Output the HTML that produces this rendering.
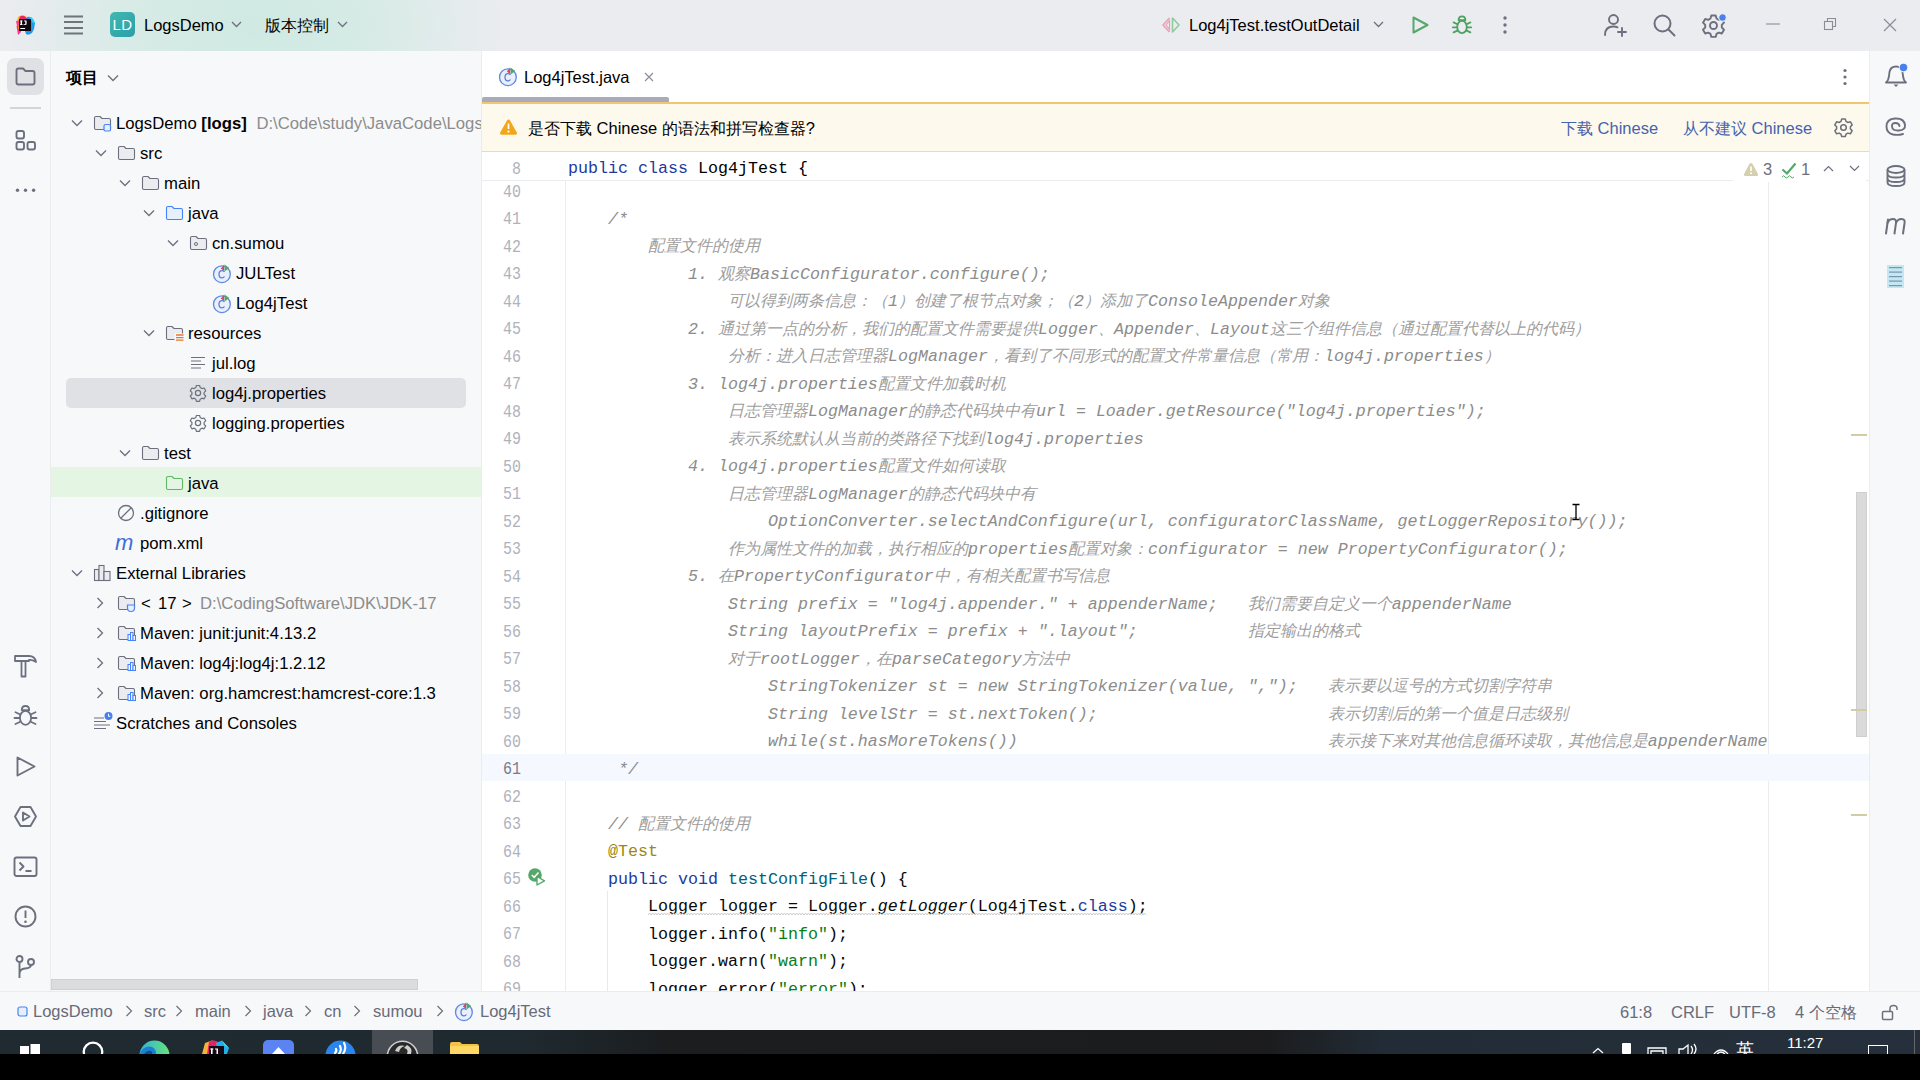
<!DOCTYPE html><html><head><meta charset="utf-8"><style>*{box-sizing:border-box;margin:0;padding:0}
html,body{width:1920px;height:1080px;overflow:hidden;background:#000;font-family:"Liberation Sans",sans-serif;color:#000}
.a{position:absolute}
.k{font-size:16px}
#title{left:0;top:0;width:1920px;height:51px;background:#EBECF0}
#grad{left:0;top:0;width:700px;height:51px;background:radial-gradient(ellipse 255px 170px at 255px 25px, rgba(200,233,222,0.8) 0%, rgba(202,234,224,0.62) 45%, rgba(235,236,240,0) 100%)}
#lstripe{left:0;top:51px;width:51px;height:940px;background:#F7F8FA;border-right:1px solid #EBECF0}
#proj{left:51px;top:51px;width:431px;height:940px;background:#F7F8FA;border-right:1px solid #EBECF0;overflow:hidden}
#editor{left:482px;top:51px;width:1387px;height:940px;background:#fff;overflow:hidden}
#rstripe{left:1869px;top:51px;width:51px;height:940px;background:#F7F8FA;border-left:1px solid #EBECF0}
#status{left:0;top:991px;width:1920px;height:39px;background:#F7F8FA;border-top:1px solid #EBECF0}
#taskbar{left:0;top:1030px;width:1920px;height:24px;background:linear-gradient(90deg,#1F2B31 0%,#1F2A30 27%,#1B1D1F 35%,#1C1C1E 66%,#222C36 72%,#25303C 100%)}
.ui{font-size:16.5px;white-space:pre;line-height:20px}
.tr{position:absolute;font-size:16.7px;white-space:pre;line-height:30px;height:30px}
.gray{color:#8C8C8C}
svg{position:absolute;overflow:visible}
.ln{position:absolute;left:0;height:27.5px;width:1387px;line-height:27.5px;font-family:"Liberation Mono",monospace;font-size:16.67px;white-space:pre}
.ln.cur{background:#F5F8FE}
.ln .num{position:absolute;left:0;top:2.5px;width:39px;text-align:right;color:#AFB2BC;font-size:17.6px;transform:scaleX(0.85);transform-origin:39px 0}
.ln.cur .num{color:#767A8A}
.ln .tx{position:absolute;left:86px;top:2px;color:#080808}
.c{color:#8C8C8C;font-style:italic}
.kw{color:#1E3A9E}
.fn{color:#00627A}
.st{font-style:italic}
.s{color:#067D17}
.an{color:#9E880D}
.c .k{color:#9D9D9D}
</style></head><body><div id="title" class="a"></div>
<div id="grad" class="a"></div>
<!-- title bar content -->
<svg style="left:15px;top:14px" width="21" height="22" viewBox="0 0 21 22">
  <path d="M3 3 Q6 0.5 9 1.5 L12 3 L6 8 L2 7 Z" fill="#FFB000" opacity="0.9"/>
  <path d="M5 2.5 Q8 1 10.5 3 L13 5 L8 13 L2 11 L4 6Z" fill="#E8246B"/>
  <path d="M1 7 L5 6.5 L6 14 L2 12Z" fill="#FF3C8A"/>
  <path d="M1.5 12 L5 11 L6 18 L3 21 Z" fill="#FF318C"/>
  <path d="M3 12 L6 10 L6 16 L3 15 Z" fill="#FC801D"/>
  <path d="M12 3 Q16 2 18 5 L20 9 L19 15 L17 19 Q13 22 11 20 L9 14 Z" fill="#1A9CF2"/>
  <path d="M14 3 Q17 3 18.5 6 L20 9 L18 9 Z" fill="#2FD3F0"/>
  <rect x="4" y="5" width="12" height="12" fill="#120811"/>
  <g fill="#fff"><rect x="5.6" y="6.6" width="1.4" height="4.4"/><rect x="5" y="6.6" width="2.6" height="0.8"/><rect x="5" y="10.2" width="2.6" height="0.8"/><path d="M9.2 6.6H11.6V10Q11.6 11.1 10.3 11.1H8.6V10.2H10.1Q10.3 10.2 10.3 9.9V7.4H9.2Z"/></g>
  <rect x="5.3" y="14" width="4.8" height="1" fill="#fff"/>
</svg>
<svg style="left:64px;top:15px" width="20" height="20" viewBox="0 0 20 20"><path d="M0 1.5H19M0 7.1H19M0 12.9H19M0 18.4H19" stroke="#6F737A" stroke-width="2"/></svg>
<div class="a" style="left:110px;top:12px;width:25px;height:25px;border-radius:5px;background:linear-gradient(135deg,#42B8B3,#2A9FA8);color:#fff;font-size:15px;line-height:25px;text-align:center;letter-spacing:0.3px">LD</div>
<div class="a ui" style="left:144px;top:15px;color:#000">LogsDemo</div>
<svg style="left:231px;top:21px" width="11" height="7" viewBox="0 0 11 7"><path d="M1 1L5.5 5.5L10 1" stroke="#6C707E" stroke-width="1.3" fill="none"/></svg>
<div class="a ui" style="left:265px;top:15px;color:#000"><span class="k">版本控制</span></div>
<svg style="left:337px;top:21px" width="11" height="7" viewBox="0 0 11 7"><path d="M1 1L5.5 5.5L10 1" stroke="#6C707E" stroke-width="1.3" fill="none"/></svg>

<svg style="left:1161px;top:16px" width="20" height="18" viewBox="0 0 20 18">
  <path d="M8.5 2 L2 9 L8.5 16" stroke="#E8A0B4" stroke-width="1.6" fill="none" stroke-linejoin="round"/>
  <path d="M8.5 4.5 L5 9 L8.5 13.5 Z" fill="none" stroke="#E8A0B4" stroke-width="1.2"/>
  <path d="M11.5 2 L18 9 L11.5 16 Z" fill="none" stroke="#8FCB9C" stroke-width="1.6" stroke-linejoin="round"/>
</svg>
<div class="a ui" style="left:1189px;top:15px;color:#000">Log4jTest.testOutDetail</div>
<svg style="left:1373px;top:21px" width="11" height="7" viewBox="0 0 11 7"><path d="M1 1L5.5 5.5L10 1" stroke="#6C707E" stroke-width="1.3" fill="none"/></svg>
<svg style="left:1410px;top:15px" width="20" height="20" viewBox="0 0 20 20"><path d="M3.5 2.5 L17.5 10 L3.5 17.5 Z" fill="none" stroke="#55A76A" stroke-width="2" stroke-linejoin="round"/></svg>
<svg style="left:1451px;top:14px" width="22" height="22" viewBox="0 0 22 22">
  <g stroke="#4FA161" stroke-width="1.8" fill="none" stroke-linecap="round" stroke-linejoin="round">
   <path d="M7.6 6.2 Q7.6 2.4 11 2.4 Q14.4 2.4 14.4 6.2 Z"/>
   <ellipse cx="11" cy="13" rx="4.8" ry="6.2"/>
   <path d="M1.8 13.3H6.2M15.8 13.3H20.2M2.6 8.4L6.4 10.2M19.4 8.4L15.6 10.2M2.6 18.4L6.4 16.6M19.4 18.4L15.6 16.6"/>
  </g>
</svg>
<svg style="left:1502px;top:15px" width="6" height="20" viewBox="0 0 6 20"><circle cx="3" cy="3" r="1.7" fill="#6C707E"/><circle cx="3" cy="10" r="1.7" fill="#6C707E"/><circle cx="3" cy="17" r="1.7" fill="#6C707E"/></svg>
<svg style="left:1603px;top:13px" width="25" height="25" viewBox="0 0 25 25">
 <g stroke="#6C707E" stroke-width="1.9" fill="none" stroke-linecap="round">
  <circle cx="10.5" cy="6.5" r="4.5"/>
  <path d="M2 22 Q2 13.5 10.5 13.5 Q13 13.5 14.5 14.3"/>
  <path d="M19 15V23M15 19H23"/>
 </g>
</svg>
<svg style="left:1652px;top:13px" width="25" height="25" viewBox="0 0 25 25"><g stroke="#6C707E" stroke-width="2" fill="none" stroke-linecap="round"><circle cx="10.5" cy="10.5" r="8"/><path d="M16.5 16.5L22.5 22.5"/></g></svg>
<svg style="left:1701px;top:13px" width="25" height="25" viewBox="0 0 25 25">
 <g stroke="#6C707E" stroke-width="1.9" fill="none" stroke-linejoin="round">
  <path d="M10.3 2.5h4.4l.8 3 2.3 1.3 3-.9 2.2 3.8-2.2 2.2v2.6l2.2 2.2-2.2 3.8-3-.9-2.3 1.3-.8 3h-4.4l-.8-3-2.3-1.3-3 .9-2.2-3.8 2.2-2.2v-2.6l-2.2-2.2 2.2-3.8 3 .9 2.3-1.3z"/>
  <circle cx="12.5" cy="12.5" r="3.5"/>
 </g>
 <circle cx="21.5" cy="4.5" r="3.8" fill="#4A80EE" stroke="#EBECF0" stroke-width="1.2"/>
</svg>
<svg style="left:1766px;top:23px" width="14" height="2" viewBox="0 0 14 2"><path d="M0 1H14" stroke="#8A8D99" stroke-width="1.1"/></svg>
<svg style="left:1823px;top:17px" width="14" height="14" viewBox="0 0 14 14"><g stroke="#8A8D99" stroke-width="1.1" fill="none"><rect x="1.5" y="4.5" width="8" height="8"/><path d="M4.5 4.5V1.5H12.5V9.5H9.5"/></g></svg>
<svg style="left:1883px;top:18px" width="14" height="14" viewBox="0 0 14 14"><path d="M1 1L13 13M13 1L1 13" stroke="#8A8D99" stroke-width="1.2"/></svg>

<div id="lstripe" class="a"></div>
<div class="a" style="left:7px;top:58px;width:37px;height:37px;border-radius:8px;background:#DFE1E5"></div>
<svg style="left:14px;top:66px" width="23" height="21" viewBox="0 0 23 21"><path d="M2.5 4.5 Q2.5 2.5 4.5 2.5 H9 L11.5 5 H18.5 Q20.5 5 20.5 7 V16.5 Q20.5 18.5 18.5 18.5 H4.5 Q2.5 18.5 2.5 16.5 Z" fill="none" stroke="#6C707E" stroke-width="1.9" stroke-linejoin="round"/></svg>
<div class="a" style="left:10px;top:107px;width:31px;height:2px;background:#D3D5DB"></div>
<svg style="left:14px;top:129px" width="24" height="24" viewBox="0 0 24 24"><g fill="none" stroke="#6C707E" stroke-width="1.9"><rect x="2.5" y="2" width="7.5" height="7.5" rx="2"/><rect x="2.5" y="13" width="7.5" height="7.5" rx="2"/><rect x="13.5" y="13" width="7.5" height="7.5" rx="2"/></g></svg>
<svg style="left:14px;top:186px" width="24" height="8" viewBox="0 0 24 8"><g fill="#6C707E"><circle cx="3.5" cy="4.3" r="1.7"/><circle cx="11.5" cy="4.3" r="1.7"/><circle cx="19.6" cy="4.3" r="1.7"/></g></svg>

<svg style="left:13px;top:653px" width="25" height="25" viewBox="0 0 25 25"><g fill="none" stroke="#6C707E" stroke-width="1.8" stroke-linejoin="round"><path d="M2 3 H16 Q22 3 23 9 Q19 6.5 16 7 V8 H2 Z"/><path d="M8.5 8 V23.5 H12.5 V8"/></g></svg>
<svg style="left:13px;top:703px" width="25" height="25" viewBox="0 0 25 25"><g stroke="#6C707E" stroke-width="1.8" fill="none" stroke-linecap="round" stroke-linejoin="round"><path d="M8.8 7.2 Q8.8 3 12.5 3 Q16.2 3 16.2 7.2 Z"/><ellipse cx="12.5" cy="14.8" rx="5.6" ry="7"/><path d="M1.5 15H6.5M18.5 15H23.5M2.5 9.3L6.8 11.3M22.5 9.3L18.2 11.3M2.5 21L6.8 19M22.5 21L18.2 19"/></g></svg>
<svg style="left:13px;top:754px" width="25" height="25" viewBox="0 0 25 25"><path d="M4.5 3.5 L21.5 12.5 L4.5 21.5 Z" fill="none" stroke="#6C707E" stroke-width="1.9" stroke-linejoin="round"/></svg>
<svg style="left:13px;top:804px" width="25" height="25" viewBox="0 0 25 25"><g fill="none" stroke="#6C707E" stroke-width="1.9" stroke-linejoin="round"><path d="M7.5 3 H17.5 L23 12.5 L17.5 22 H7.5 L2 12.5 Z"/><path d="M10 8.5 L16.5 12.5 L10 16.5 Z"/></g></svg>
<svg style="left:13px;top:854px" width="25" height="25" viewBox="0 0 25 25"><g fill="none" stroke="#6C707E" stroke-width="1.9" stroke-linejoin="round"><rect x="1.5" y="3.5" width="22" height="18.5" rx="2"/><path d="M6.5 8.5L10.5 12.5L6.5 16.5M12.5 17H18.5"/></g></svg>
<svg style="left:13px;top:904px" width="25" height="25" viewBox="0 0 25 25"><g fill="none" stroke="#6C707E" stroke-width="1.9"><circle cx="12.5" cy="12.5" r="10"/><path d="M12.5 6.5V14"/></g><circle cx="12.5" cy="17.8" r="1.3" fill="#6C707E"/></svg>
<svg style="left:13px;top:954px" width="25" height="25" viewBox="0 0 25 25"><g fill="none" stroke="#6C707E" stroke-width="1.9"><circle cx="6.5" cy="5" r="3"/><circle cx="18" cy="8" r="3"/><path d="M6.5 8V24M6.5 20Q6.5 15 12 14.5Q18 14 18 11"/></g></svg>

<div id="proj" class="a">
<div class="a ui" style="left:15px;top:16px;font-weight:bold"><span class="k">项目</span></div>
<svg style="left:56px;top:23px" width="12" height="8" viewBox="0 0 12 8"><path d="M1 1.5L6 6.5L11 1.5" stroke="#6C707E" stroke-width="1.3" fill="none"/></svg>
<div class="a" style="left:15px;top:327px;width:400px;height:30px;border-radius:5px;background:#DFE1E5"></div>
<div class="a" style="left:0;top:416px;width:430px;height:30px;background:#E4F5E4"></div>
<svg style="left:20px;top:68px" width="12" height="8" viewBox="0 0 12 8"><path d="M1 1.5L6 6.5L11 1.5" stroke="#6C707E" stroke-width="1.3" fill="none"/></svg>
<svg style="left:42px;top:64px" width="19" height="16" viewBox="0 0 19 16"><path d="M1.5 3 Q1.5 1.5 3 1.5 H7 L9 3.5 H16 Q17.5 3.5 17.5 5 V13 Q17.5 14.5 16 14.5 H3 Q1.5 14.5 1.5 13 Z" fill="#EBECF0" stroke="#6C707E" stroke-width="1.1" stroke-linejoin="round"/><rect x="11" y="9.5" width="6.5" height="6.5" rx="1.5" fill="#E7EFFD" stroke="#4682FA" stroke-width="1.2"/></svg>
<div class="tr" style="left:65px;top:58px">LogsDemo <b>[logs]</b><span class="gray" style="margin-left:5px"> D:\Code\study\JavaCode\LogsDemo</span></div>
<svg style="left:44px;top:98px" width="12" height="8" viewBox="0 0 12 8"><path d="M1 1.5L6 6.5L11 1.5" stroke="#6C707E" stroke-width="1.3" fill="none"/></svg>
<svg style="left:66px;top:94px" width="19" height="16" viewBox="0 0 19 16"><path d="M1.5 3 Q1.5 1.5 3 1.5 H7 L9 3.5 H16 Q17.5 3.5 17.5 5 V13 Q17.5 14.5 16 14.5 H3 Q1.5 14.5 1.5 13 Z" fill="#EBECF0" stroke="#6C707E" stroke-width="1.1" stroke-linejoin="round"/></svg>
<div class="tr" style="left:89px;top:88px">src</div>
<svg style="left:68px;top:128px" width="12" height="8" viewBox="0 0 12 8"><path d="M1 1.5L6 6.5L11 1.5" stroke="#6C707E" stroke-width="1.3" fill="none"/></svg>
<svg style="left:90px;top:124px" width="19" height="16" viewBox="0 0 19 16"><path d="M1.5 3 Q1.5 1.5 3 1.5 H7 L9 3.5 H16 Q17.5 3.5 17.5 5 V13 Q17.5 14.5 16 14.5 H3 Q1.5 14.5 1.5 13 Z" fill="#EBECF0" stroke="#6C707E" stroke-width="1.1" stroke-linejoin="round"/></svg>
<div class="tr" style="left:113px;top:118px">main</div>
<svg style="left:92px;top:158px" width="12" height="8" viewBox="0 0 12 8"><path d="M1 1.5L6 6.5L11 1.5" stroke="#6C707E" stroke-width="1.3" fill="none"/></svg>
<svg style="left:114px;top:154px" width="19" height="16" viewBox="0 0 19 16"><path d="M1.5 3 Q1.5 1.5 3 1.5 H7 L9 3.5 H16 Q17.5 3.5 17.5 5 V13 Q17.5 14.5 16 14.5 H3 Q1.5 14.5 1.5 13 Z" fill="#E7EFFD" stroke="#4682FA" stroke-width="1.1" stroke-linejoin="round"/></svg>
<div class="tr" style="left:137px;top:148px">java</div>
<svg style="left:116px;top:188px" width="12" height="8" viewBox="0 0 12 8"><path d="M1 1.5L6 6.5L11 1.5" stroke="#6C707E" stroke-width="1.3" fill="none"/></svg>
<svg style="left:138px;top:184px" width="19" height="16" viewBox="0 0 19 16"><path d="M1.5 3 Q1.5 1.5 3 1.5 H7 L9 3.5 H16 Q17.5 3.5 17.5 5 V13 Q17.5 14.5 16 14.5 H3 Q1.5 14.5 1.5 13 Z" fill="#EBECF0" stroke="#6C707E" stroke-width="1.1" stroke-linejoin="round"/><circle cx="7" cy="9" r="1.5" fill="none" stroke="#6C707E" stroke-width="1"/></svg>
<div class="tr" style="left:161px;top:178px">cn.sumou</div>
<svg style="left:162px;top:213px" width="19" height="19" viewBox="0 0 19 19"><circle cx="8.9" cy="10.2" r="8.4" fill="#E9EFFC" stroke="#5F88E2" stroke-width="1.3"/><path d="M11.5 7.9 Q10.6 6.6 9 6.6 Q6 6.6 6 10.2 Q6 13.8 9 13.8 Q10.6 13.8 11.5 12.5" fill="none" stroke="#5A80D8" stroke-width="1.3"/><path d="M7.8 4.6 L11.2 0.6 L11.2 7.2 Z" fill="#D6486A"/><path d="M11.6 0.4 L16.2 4 L11.6 7.6 Z" fill="#4DA861"/></svg>
<div class="tr" style="left:185px;top:208px">JULTest</div>
<svg style="left:162px;top:243px" width="19" height="19" viewBox="0 0 19 19"><circle cx="8.9" cy="10.2" r="8.4" fill="#E9EFFC" stroke="#5F88E2" stroke-width="1.3"/><path d="M11.5 7.9 Q10.6 6.6 9 6.6 Q6 6.6 6 10.2 Q6 13.8 9 13.8 Q10.6 13.8 11.5 12.5" fill="none" stroke="#5A80D8" stroke-width="1.3"/><path d="M7.8 4.6 L11.2 0.6 L11.2 7.2 Z" fill="#D6486A"/><path d="M11.6 0.4 L16.2 4 L11.6 7.6 Z" fill="#4DA861"/></svg>
<div class="tr" style="left:185px;top:238px">Log4jTest</div>
<svg style="left:92px;top:278px" width="12" height="8" viewBox="0 0 12 8"><path d="M1 1.5L6 6.5L11 1.5" stroke="#6C707E" stroke-width="1.3" fill="none"/></svg>
<svg style="left:114px;top:274px" width="19" height="16" viewBox="0 0 19 16"><path d="M1.5 3 Q1.5 1.5 3 1.5 H7 L9 3.5 H16 Q17.5 3.5 17.5 5 V13 Q17.5 14.5 16 14.5 H3 Q1.5 14.5 1.5 13 Z" fill="#EBECF0" stroke="#6C707E" stroke-width="1.1" stroke-linejoin="round"/><rect x="9.5" y="8.5" width="9" height="8" fill="#F7F8FA"/><g stroke="#E8772E" stroke-width="1.3"><path d="M11 10H18.5M11 12.6H18.5M11 15.2H18.5"/></g></svg>
<div class="tr" style="left:137px;top:268px">resources</div>
<svg style="left:139px;top:305px" width="16" height="14" viewBox="0 0 16 14"><g stroke="#6C707E" stroke-width="1.1"><path d="M1 1.5H15M1 5H11M1 8.5H15M1 12H11"/></g></svg>
<div class="tr" style="left:161px;top:298px">jul.log</div>
<svg style="left:138px;top:333px" width="18" height="18" viewBox="0 0 18 18"><g stroke="#6C707E" stroke-width="1.2" fill="none" stroke-linejoin="round"><path d="M7.4 1.5h3.2l.6 2.1 1.7 1 2.2-.6 1.6 2.8-1.6 1.6v2l1.6 1.6-1.6 2.8-2.2-.6-1.7 1-.6 2.1h-3.2l-.6-2.1-1.7-1-2.2.6-1.6-2.8 1.6-1.6v-2l-1.6-1.6 1.6-2.8 2.2.6 1.7-1z"/><circle cx="9" cy="9" r="2.6"/></g></svg>
<div class="tr" style="left:161px;top:328px">log4j.properties</div>
<svg style="left:138px;top:363px" width="18" height="18" viewBox="0 0 18 18"><g stroke="#6C707E" stroke-width="1.2" fill="none" stroke-linejoin="round"><path d="M7.4 1.5h3.2l.6 2.1 1.7 1 2.2-.6 1.6 2.8-1.6 1.6v2l1.6 1.6-1.6 2.8-2.2-.6-1.7 1-.6 2.1h-3.2l-.6-2.1-1.7-1-2.2.6-1.6-2.8 1.6-1.6v-2l-1.6-1.6 1.6-2.8 2.2.6 1.7-1z"/><circle cx="9" cy="9" r="2.6"/></g></svg>
<div class="tr" style="left:161px;top:358px">logging.properties</div>
<svg style="left:68px;top:398px" width="12" height="8" viewBox="0 0 12 8"><path d="M1 1.5L6 6.5L11 1.5" stroke="#6C707E" stroke-width="1.3" fill="none"/></svg>
<svg style="left:90px;top:394px" width="19" height="16" viewBox="0 0 19 16"><path d="M1.5 3 Q1.5 1.5 3 1.5 H7 L9 3.5 H16 Q17.5 3.5 17.5 5 V13 Q17.5 14.5 16 14.5 H3 Q1.5 14.5 1.5 13 Z" fill="#EBECF0" stroke="#6C707E" stroke-width="1.1" stroke-linejoin="round"/></svg>
<div class="tr" style="left:113px;top:388px">test</div>
<svg style="left:114px;top:424px" width="19" height="16" viewBox="0 0 19 16"><path d="M1.5 3 Q1.5 1.5 3 1.5 H7 L9 3.5 H16 Q17.5 3.5 17.5 5 V13 Q17.5 14.5 16 14.5 H3 Q1.5 14.5 1.5 13 Z" fill="#E4F5E4" stroke="#5FB865" stroke-width="1.1" stroke-linejoin="round"/></svg>
<div class="tr" style="left:137px;top:418px">java</div>
<svg style="left:66px;top:453px" width="18" height="18" viewBox="0 0 18 18"><g stroke="#6C707E" stroke-width="1.3" fill="none"><circle cx="9" cy="9" r="7.5"/><path d="M4 14L14 4"/></g></svg>
<div class="tr" style="left:89px;top:448px">.gitignore</div>
<div class="a" style="left:64px;top:477px;height:30px;line-height:30px;font-family:'Liberation Sans';font-style:italic;font-size:22px;color:#3E6CD8;letter-spacing:-0.5px">m</div>
<div class="tr" style="left:89px;top:478px">pom.xml</div>
<svg style="left:20px;top:518px" width="12" height="8" viewBox="0 0 12 8"><path d="M1 1.5L6 6.5L11 1.5" stroke="#6C707E" stroke-width="1.3" fill="none"/></svg>
<svg style="left:42px;top:513px" width="19" height="18" viewBox="0 0 19 18"><g fill="#EBECF0" stroke="#6C707E" stroke-width="1.1"><rect x="1.5" y="5.5" width="4.5" height="11"/><rect x="6" y="1.5" width="5" height="15"/><rect x="11" y="7.5" width="6" height="9"/></g></svg>
<div class="tr" style="left:65px;top:508px">External Libraries</div>
<svg style="left:45px;top:546px" width="8" height="12" viewBox="0 0 8 12"><path d="M1.5 1L6.5 6L1.5 11" stroke="#6C707E" stroke-width="1.3" fill="none"/></svg>
<svg style="left:66px;top:544px" width="19" height="16" viewBox="0 0 19 16"><path d="M1.5 3 Q1.5 1.5 3 1.5 H7 L9 3.5 H16 Q17.5 3.5 17.5 5 V13 Q17.5 14.5 16 14.5 H3 Q1.5 14.5 1.5 13 Z" fill="#EBECF0" stroke="#6C707E" stroke-width="1.1" stroke-linejoin="round"/><path d="M10.5 10 H17.5 V13 Q17.5 16.5 14 16.5 Q10.5 16.5 10.5 13 Z" fill="#E7EFFD" stroke="#4682FA" stroke-width="1.2"/></svg>
<div class="tr" style="left:89px;top:538px"></div>
<svg style="left:45px;top:576px" width="8" height="12" viewBox="0 0 8 12"><path d="M1.5 1L6.5 6L1.5 11" stroke="#6C707E" stroke-width="1.3" fill="none"/></svg>
<svg style="left:66px;top:574px" width="19" height="16" viewBox="0 0 19 16"><path d="M1.5 3 Q1.5 1.5 3 1.5 H7 L9 3.5 H16 Q17.5 3.5 17.5 5 V13 Q17.5 14.5 16 14.5 H3 Q1.5 14.5 1.5 13 Z" fill="#EBECF0" stroke="#6C707E" stroke-width="1.1" stroke-linejoin="round"/><g fill="#EDF3FF" stroke="#4682FA" stroke-width="1"><rect x="11" y="9.5" width="2.5" height="6"/><rect x="13.5" y="7.5" width="2.5" height="8"/><rect x="16" y="10.5" width="2.5" height="5"/></g></svg>
<div class="tr" style="left:89px;top:568px">Maven: junit:junit:4.13.2</div>
<svg style="left:45px;top:606px" width="8" height="12" viewBox="0 0 8 12"><path d="M1.5 1L6.5 6L1.5 11" stroke="#6C707E" stroke-width="1.3" fill="none"/></svg>
<svg style="left:66px;top:604px" width="19" height="16" viewBox="0 0 19 16"><path d="M1.5 3 Q1.5 1.5 3 1.5 H7 L9 3.5 H16 Q17.5 3.5 17.5 5 V13 Q17.5 14.5 16 14.5 H3 Q1.5 14.5 1.5 13 Z" fill="#EBECF0" stroke="#6C707E" stroke-width="1.1" stroke-linejoin="round"/><g fill="#EDF3FF" stroke="#4682FA" stroke-width="1"><rect x="11" y="9.5" width="2.5" height="6"/><rect x="13.5" y="7.5" width="2.5" height="8"/><rect x="16" y="10.5" width="2.5" height="5"/></g></svg>
<div class="tr" style="left:89px;top:598px">Maven: log4j:log4j:1.2.12</div>
<svg style="left:45px;top:636px" width="8" height="12" viewBox="0 0 8 12"><path d="M1.5 1L6.5 6L1.5 11" stroke="#6C707E" stroke-width="1.3" fill="none"/></svg>
<svg style="left:66px;top:634px" width="19" height="16" viewBox="0 0 19 16"><path d="M1.5 3 Q1.5 1.5 3 1.5 H7 L9 3.5 H16 Q17.5 3.5 17.5 5 V13 Q17.5 14.5 16 14.5 H3 Q1.5 14.5 1.5 13 Z" fill="#EBECF0" stroke="#6C707E" stroke-width="1.1" stroke-linejoin="round"/><g fill="#EDF3FF" stroke="#4682FA" stroke-width="1"><rect x="11" y="9.5" width="2.5" height="6"/><rect x="13.5" y="7.5" width="2.5" height="8"/><rect x="16" y="10.5" width="2.5" height="5"/></g></svg>
<div class="tr" style="left:89px;top:628px">Maven: org.hamcrest:hamcrest-core:1.3</div>
<svg style="left:42px;top:660px" width="20" height="20" viewBox="0 0 20 20"><g stroke="#6C707E" stroke-width="1.1"><path d="M1 7H11M1 10.5H13M1 14H17M1 17.5H13"/></g><circle cx="15.5" cy="5" r="4" fill="#4A80EE"/><path d="M15.5 2.8V5.3H17.3" stroke="#fff" stroke-width="1" fill="none"/></svg>
<div class="tr" style="left:65px;top:658px">Scratches and Consoles</div>
<div class="tr" style="left:90px;top:538px">&lt;</div><div class="tr" style="left:107px;top:538px">17</div><div class="tr" style="left:131px;top:538px">&gt;</div>
<div class="tr gray" style="left:149px;top:538px">D:\CodingSoftware\JDK\JDK-17</div>
<div class="a" style="left:0;top:928px;width:367px;height:11px;background:#DCDCDC;border:1px solid #D0D0D0"></div>
</div>

<div id="editor" class="a">
  <div class="a" style="left:0;top:0;width:1387px;height:51px;background:#fff"></div>
  <svg style="left:17px;top:16px" width="19" height="19" viewBox="0 0 19 19"><circle cx="8.9" cy="10.2" r="8.4" fill="#E9EFFC" stroke="#5F88E2" stroke-width="1.3"/><path d="M11.5 7.9 Q10.6 6.6 9 6.6 Q6 6.6 6 10.2 Q6 13.8 9 13.8 Q10.6 13.8 11.5 12.5" fill="none" stroke="#5A80D8" stroke-width="1.3"/><path d="M7.8 4.6 L11.2 0.6 L11.2 7.2 Z" fill="#D6486A"/><path d="M11.6 0.4 L16.2 4 L11.6 7.6 Z" fill="#4DA861"/></svg>
  <div class="a ui" style="left:42px;top:16px">Log4jTest.java</div>
  <svg style="left:162px;top:21px" width="10" height="10" viewBox="0 0 10 10"><path d="M1 1L9 9M9 1L1 9" stroke="#8C8F9B" stroke-width="1.2"/></svg>
  <div class="a" style="left:0;top:46px;width:187px;height:5px;border-radius:2px 2px 0 0;background:#A7ABBB"></div>
  <svg style="left:1360px;top:16px" width="6" height="20" viewBox="0 0 6 20"><circle cx="3" cy="3.5" r="1.6" fill="#6C707E"/><circle cx="3" cy="10" r="1.6" fill="#6C707E"/><circle cx="3" cy="16.5" r="1.6" fill="#6C707E"/></svg>

  <!-- banner -->
  <div class="a" style="left:0;top:51px;width:1387px;height:50px;background:#FDF9EC;border-top:2px solid #F1C66E;border-bottom:1px solid #F5D9A3"></div>
  <svg style="left:17px;top:67px" width="19" height="19" viewBox="0 0 19 19"><path d="M9.5 1.5 Q10.5 1.5 11.2 2.7 L17.8 14.6 Q18.6 16.5 16.6 16.8 H2.4 Q0.4 16.5 1.2 14.6 L7.8 2.7 Q8.5 1.5 9.5 1.5Z" fill="#F2A71B"/><path d="M9.5 5.5V11" stroke="#fff" stroke-width="1.7"/><circle cx="9.5" cy="13.6" r="1.1" fill="#fff"/></svg>
  <div class="a ui" style="left:46px;top:67px"><span class="k">是否下载</span> Chinese <span class="k">的语法和拼写检查器</span>?</div>
  <div class="a ui" style="left:1079px;top:67px;color:#4563AC"><span class="k">下载</span> Chinese</div>
  <div class="a ui" style="left:1201px;top:67px;color:#4563AC"><span class="k">从不建议</span> Chinese</div>
  <svg style="left:1351px;top:66px" width="21" height="21" viewBox="0 0 21 21"><g stroke="#6C707E" stroke-width="1.5" fill="none" stroke-linejoin="round"><path d="M8.7 2h3.6l.7 2.4 1.9 1.1 2.5-.7 1.8 3.1-1.8 1.8v2.2l1.8 1.8-1.8 3.1-2.5-.7-1.9 1.1-.7 2.4h-3.6l-.7-2.4-1.9-1.1-2.5.7-1.8-3.1 1.8-1.8v-2.2l-1.8-1.8 1.8-3.1 2.5.7 1.9-1.1z"/><circle cx="10.5" cy="10.5" r="2.8"/></g></svg>

  <!-- sticky -->
  <div class="a" style="left:0;top:101px;width:1387px;height:29px;background:#fff;border-bottom:1px solid #EBECF0"></div>
  <div class="a" style="left:0;top:104px;width:1387px;height:28px;line-height:28px;font-family:'Liberation Mono',monospace;font-size:16.67px;white-space:pre">
<span class="a" style="left:0;top:0;width:39px;text-align:right;color:#AFB2BC;font-size:17.6px;transform:scaleX(0.85);transform-origin:39px 0">8</span><span class="a" style="left:86px;top:0"><span class="kw">public class </span>Log4jTest {</span>
  </div>

  <!-- gutter & code -->
  <div class="a" style="left:83px;top:130px;width:1px;height:810px;background:#EBECF0"></div>
  <div class="a" style="left:1286px;top:130px;width:1px;height:810px;background:#EBECF0"></div>
  <div class="a" style="left:0;top:130px;width:1387px;height:810px;overflow:hidden"><div id="code" class="a" style="left:0;top:-181px;width:1387px;height:991px">
<div class="ln" style="top:176.25px"><span class="num">40</span><span class="tx"></span></div>
<div class="ln" style="top:203.75px"><span class="num">41</span><span class="tx"><span class="c">    /*</span></span></div>
<div class="ln" style="top:231.25px"><span class="num">42</span><span class="tx"><span class="c">        <span class="k">配置文件的使用</span></span></span></div>
<div class="ln" style="top:258.75px"><span class="num">43</span><span class="tx"><span class="c">            1. <span class="k">观察</span>BasicConfigurator.configure();</span></span></div>
<div class="ln" style="top:286.25px"><span class="num">44</span><span class="tx"><span class="c">                <span class="k">可以得到两条信息：（</span>1<span class="k">）创建了根节点对象；（</span>2<span class="k">）添加了</span>ConsoleAppender<span class="k">对象</span></span></span></div>
<div class="ln" style="top:313.75px"><span class="num">45</span><span class="tx"><span class="c">            2. <span class="k">通过第一点的分析，我们的配置文件需要提供</span>Logger<span class="k">、</span>Appender<span class="k">、</span>Layout<span class="k">这三个组件信息（通过配置代替以上的代码）</span></span></span></div>
<div class="ln" style="top:341.25px"><span class="num">46</span><span class="tx"><span class="c">                <span class="k">分析：进入日志管理器</span>LogManager<span class="k">，看到了不同形式的配置文件常量信息（常用：</span>log4j.properties<span class="k">）</span></span></span></div>
<div class="ln" style="top:368.75px"><span class="num">47</span><span class="tx"><span class="c">            3. log4j.properties<span class="k">配置文件加载时机</span></span></span></div>
<div class="ln" style="top:396.25px"><span class="num">48</span><span class="tx"><span class="c">                <span class="k">日志管理器</span>LogManager<span class="k">的静态代码块中有</span>url = Loader.getResource(&quot;log4j.properties&quot;);</span></span></div>
<div class="ln" style="top:423.75px"><span class="num">49</span><span class="tx"><span class="c">                <span class="k">表示系统默认从当前的类路径下找到</span>log4j.properties</span></span></div>
<div class="ln" style="top:451.25px"><span class="num">50</span><span class="tx"><span class="c">            4. log4j.properties<span class="k">配置文件如何读取</span></span></span></div>
<div class="ln" style="top:478.75px"><span class="num">51</span><span class="tx"><span class="c">                <span class="k">日志管理器</span>LogManager<span class="k">的静态代码块中有</span></span></span></div>
<div class="ln" style="top:506.25px"><span class="num">52</span><span class="tx"><span class="c">                    OptionConverter.selectAndConfigure(url, configuratorClassName, getLoggerRepository());</span></span></div>
<div class="ln" style="top:533.75px"><span class="num">53</span><span class="tx"><span class="c">                <span class="k">作为属性文件的加载，执行相应的</span>properties<span class="k">配置对象：</span>configurator = new PropertyConfigurator();</span></span></div>
<div class="ln" style="top:561.25px"><span class="num">54</span><span class="tx"><span class="c">            5. <span class="k">在</span>PropertyConfigurator<span class="k">中，有相关配置书写信息</span></span></span></div>
<div class="ln" style="top:588.75px"><span class="num">55</span><span class="tx"><span class="c">                String prefix = &quot;log4j.appender.&quot; + appenderName;   <span class="k">我们需要自定义一个</span>appenderName</span></span></div>
<div class="ln" style="top:616.25px"><span class="num">56</span><span class="tx"><span class="c">                String layoutPrefix = prefix + &quot;.layout&quot;;           <span class="k">指定输出的格式</span></span></span></div>
<div class="ln" style="top:643.75px"><span class="num">57</span><span class="tx"><span class="c">                <span class="k">对于</span>rootLogger<span class="k">，在</span>parseCategory<span class="k">方法中</span></span></span></div>
<div class="ln" style="top:671.25px"><span class="num">58</span><span class="tx"><span class="c">                    StringTokenizer st = new StringTokenizer(value, &quot;,&quot;);   <span class="k">表示要以逗号的方式切割字符串</span></span></span></div>
<div class="ln" style="top:698.75px"><span class="num">59</span><span class="tx"><span class="c">                    String levelStr = st.nextToken();                       <span class="k">表示切割后的第一个值是日志级别</span></span></span></div>
<div class="ln" style="top:726.25px"><span class="num">60</span><span class="tx"><span class="c">                    while(st.hasMoreTokens())                               <span class="k">表示接下来对其他信息循环读取，其他信息是</span>appenderName</span></span></div>
<div class="ln cur" style="top:753.75px"><span class="num">61</span><span class="tx"><span class="c">     */</span></span></div>
<div class="ln" style="top:781.25px"><span class="num">62</span><span class="tx"></span></div>
<div class="ln" style="top:808.75px"><span class="num">63</span><span class="tx"><span class="c">    // <span class="k">配置文件的使用</span></span></span></div>
<div class="ln" style="top:836.25px"><span class="num">64</span><span class="tx">    <span class="an">@Test</span></span></div>
<div class="ln" style="top:863.75px"><span class="num">65</span><span class="tx">    <span class="kw">public void </span><span class="fn">testConfigFile</span>() {</span></div>
<div class="ln" style="top:891.25px"><span class="num">66</span><span class="tx">        Logger logger = Logger.<span class="st">getLogger</span>(Log4jTest.<span class="kw">class</span>);</span></div>
<div class="ln" style="top:918.75px"><span class="num">67</span><span class="tx">        logger.info(<span class="s">&quot;info&quot;</span>);</span></div>
<div class="ln" style="top:946.25px"><span class="num">68</span><span class="tx">        logger.warn(<span class="s">&quot;warn&quot;</span>);</span></div>
<div class="ln" style="top:973.75px"><span class="num">69</span><span class="tx">        logger.error(<span class="s">&quot;error&quot;</span>);</span></div>
  </div></div>

  <!-- inspection widget -->
  <div class="a" style="left:1251px;top:101px;width:133px;height:30px;background:#fff"></div>
  <svg style="left:1261px;top:111px" width="16" height="15" viewBox="0 0 16 15"><path d="M8 1 Q9 1 9.6 2 L15 12 Q15.6 13.8 13.8 14 H2.2 Q0.4 13.8 1 12 L6.4 2 Q7 1 8 1Z" fill="#D6CFAE"/><path d="M8 4.5V9" stroke="#fff" stroke-width="1.6"/><circle cx="8" cy="11.3" r="1" fill="#fff"/></svg>
  <div class="a ui" style="left:1281px;top:108px;color:#6C707E">3</div>
  <svg style="left:1299px;top:111px" width="16" height="17" viewBox="0 0 16 17"><path d="M1.5 7.5 L6 11.5 L14.5 1.5" stroke="#55A76A" stroke-width="2.2" fill="none"/><path d="M1 15 Q2.5 12.5 4 15 Q5.5 17 7 15 Q8.5 12.5 10 15 Q11.5 17 13 15" stroke="#55A76A" stroke-width="1" fill="none"/></svg>
  <div class="a ui" style="left:1319px;top:108px;color:#6C707E">1</div>
  <svg style="left:1341px;top:114px" width="11" height="7" viewBox="0 0 11 7"><path d="M1 6L5.5 1.5L10 6" stroke="#6C707E" stroke-width="1.2" fill="none"/></svg>
  <svg style="left:1367px;top:114px" width="11" height="7" viewBox="0 0 11 7"><path d="M1 1L5.5 5.5L10 1" stroke="#6C707E" stroke-width="1.2" fill="none"/></svg>
  <!-- scrollbar + markers -->
  <div class="a" style="left:1374px;top:441px;width:11px;height:245px;background:#DADADA;border:1px solid #CFCFCF"></div>
  <div class="a" style="left:1369px;top:383px;width:16px;height:2px;background:#D2CCA0"></div>
  <div class="a" style="left:1369px;top:658px;width:16px;height:2px;background:#D2CCA0"></div>
  <div class="a" style="left:1369px;top:763px;width:16px;height:2px;background:#D2CCA0"></div>
  <!-- gutter run icon -->
  <svg style="left:45px;top:816px" width="20" height="20" viewBox="0 0 20 20"><circle cx="8" cy="8" r="6.8" fill="#55A76A"/><path d="M4.8 8 L7.2 10.3 L11.5 5.5" stroke="#fff" stroke-width="1.5" fill="none"/><path d="M10 9.5 L17.5 13.8 L10 18 Z" fill="#fff" stroke="#55A76A" stroke-width="1.4" stroke-linejoin="round"/></svg>
  <div class="a" style="left:125px;top:840px;width:1px;height:100px;background:#E8E9EC"></div>
  <svg style="left:166px;top:861px" width="500" height="4" viewBox="0 0 500 4"><path d="M0 3 L1.5 1 L3 3 L4.5 1 L6 3 L7.5 1 L9 3 L10.5 1 L12 3 L13.5 1 L15 3 L16.5 1 L18 3 L19.5 1 L21 3 L22.5 1 L24 3 L25.5 1 L27 3 L28.5 1 L30 3 L31.5 1 L33 3 L34.5 1 L36 3 L37.5 1 L39 3 L40.5 1 L42 3 L43.5 1 L45 3 L46.5 1 L48 3 L49.5 1 L51 3 L52.5 1 L54 3 L55.5 1 L57 3 L58.5 1 L60 3 L61.5 1 L63 3 L64.5 1 L66 3 L67.5 1 L69 3 L70.5 1 L72 3 L73.5 1 L75 3 L76.5 1 L78 3 L79.5 1 L81 3 L82.5 1 L84 3 L85.5 1 L87 3 L88.5 1 L90 3 L91.5 1 L93 3 L94.5 1 L96 3 L97.5 1 L99 3 L100.5 1 L102 3 L103.5 1 L105 3 L106.5 1 L108 3 L109.5 1 L111 3 L112.5 1 L114 3 L115.5 1 L117 3 L118.5 1 L120 3 L121.5 1 L123 3 L124.5 1 L126 3 L127.5 1 L129 3 L130.5 1 L132 3 L133.5 1 L135 3 L136.5 1 L138 3 L139.5 1 L141 3 L142.5 1 L144 3 L145.5 1 L147 3 L148.5 1 L150 3 L151.5 1 L153 3 L154.5 1 L156 3 L157.5 1 L159 3 L160.5 1 L162 3 L163.5 1 L165 3 L166.5 1 L168 3 L169.5 1 L171 3 L172.5 1 L174 3 L175.5 1 L177 3 L178.5 1 L180 3 L181.5 1 L183 3 L184.5 1 L186 3 L187.5 1 L189 3 L190.5 1 L192 3 L193.5 1 L195 3 L196.5 1 L198 3 L199.5 1 L201 3 L202.5 1 L204 3 L205.5 1 L207 3 L208.5 1 L210 3 L211.5 1 L213 3 L214.5 1 L216 3 L217.5 1 L219 3 L220.5 1 L222 3 L223.5 1 L225 3 L226.5 1 L228 3 L229.5 1 L231 3 L232.5 1 L234 3 L235.5 1 L237 3 L238.5 1 L240 3 L241.5 1 L243 3 L244.5 1 L246 3 L247.5 1 L249 3 L250.5 1 L252 3 L253.5 1 L255 3 L256.5 1 L258 3 L259.5 1 L261 3 L262.5 1 L264 3 L265.5 1 L267 3 L268.5 1 L270 3 L271.5 1 L273 3 L274.5 1 L276 3 L277.5 1 L279 3 L280.5 1 L282 3 L283.5 1 L285 3 L286.5 1 L288 3 L289.5 1 L291 3 L292.5 1 L294 3 L295.5 1 L297 3 L298.5 1 L300 3 L301.5 1 L303 3 L304.5 1 L306 3 L307.5 1 L309 3 L310.5 1 L312 3 L313.5 1 L315 3 L316.5 1 L318 3 L319.5 1 L321 3 L322.5 1 L324 3 L325.5 1 L327 3 L328.5 1 L330 3 L331.5 1 L333 3 L334.5 1 L336 3 L337.5 1 L339 3 L340.5 1 L342 3 L343.5 1 L345 3 L346.5 1 L348 3 L349.5 1 L351 3 L352.5 1 L354 3 L355.5 1 L357 3 L358.5 1 L360 3 L361.5 1 L363 3 L364.5 1 L366 3 L367.5 1 L369 3 L370.5 1 L372 3 L373.5 1 L375 3 L376.5 1 L378 3 L379.5 1 L381 3 L382.5 1 L384 3 L385.5 1 L387 3 L388.5 1 L390 3 L391.5 1 L393 3 L394.5 1 L396 3 L397.5 1 L399 3 L400.5 1 L402 3 L403.5 1 L405 3 L406.5 1 L408 3 L409.5 1 L411 3 L412.5 1 L414 3 L415.5 1 L417 3 L418.5 1 L420 3 L421.5 1 L423 3 L424.5 1 L426 3 L427.5 1 L429 3 L430.5 1 L432 3 L433.5 1 L435 3 L436.5 1 L438 3 L439.5 1 L441 3 L442.5 1 L444 3 L445.5 1 L447 3 L448.5 1 L450 3 L451.5 1 L453 3 L454.5 1 L456 3 L457.5 1 L459 3 L460.5 1 L462 3 L463.5 1 L465 3 L466.5 1 L468 3 L469.5 1 L471 3 L472.5 1 L474 3 L475.5 1 L477 3 L478.5 1 L480 3 L481.5 1 L483 3 L484.5 1 L486 3 L487.5 1 L489 3 L490.5 1 L492 3 L493.5 1 L495 3 L496.5 1 L498 3" stroke="#C8C8C8" stroke-width="0.9" fill="none"/></svg>
</div>

<div id="rstripe" class="a"></div>
<svg style="left:1884px;top:62px" width="25" height="27" viewBox="0 0 25 27"><g stroke="#6C707E" stroke-width="1.9" fill="none" stroke-linejoin="round"><path d="M2 20.5 Q4.5 18.5 5 14 L5.5 10 Q6.5 4.5 12 4.5 Q17.5 4.5 18.5 10 L19 14 Q19.5 18.5 22 20.5 Z"/></g><path d="M9.5 22.5 H14.5 L12 25 Z" fill="#6C707E"/><circle cx="19.5" cy="5.5" r="4.3" fill="#4A80EE" stroke="#F7F8FA" stroke-width="1"/></svg>
<svg style="left:1884px;top:114px" width="24" height="24" viewBox="0 0 24 24"><g stroke="#6C707E" stroke-width="1.9" fill="none" stroke-linecap="round"><path d="M19 20 Q14 21.5 9 20.5 Q2.5 19 2.5 12.5 Q2.5 5 11 4.5 Q20 4 21 11 Q21.5 16 15 16.5 Q8.5 17 8 12.5 Q7.5 9 11.5 9 Q15 9 15.5 12"/></g></svg>
<svg style="left:1884px;top:164px" width="24" height="24" viewBox="0 0 24 24"><g stroke="#6C707E" stroke-width="1.9" fill="none"><ellipse cx="12" cy="5.5" rx="8.5" ry="3.5"/><path d="M3.5 5.5V18.5Q3.5 22 12 22Q20.5 22 20.5 18.5V5.5M3.5 10Q3.5 13.5 12 13.5Q20.5 13.5 20.5 10M3.5 14.5Q3.5 18 12 18Q20.5 18 20.5 14.5"/></g></svg>
<svg style="left:1885px;top:216px" width="26" height="20" viewBox="0 0 26 20"><g stroke="#6C707E" stroke-width="2" fill="none" stroke-linecap="round" stroke-linejoin="round"><path d="M3 3.5 L1 17.5"/><path d="M2.5 7 Q4 3 8 3 Q11.5 3 11 7 L9.5 17.5"/><path d="M11 7 Q12.5 3 16.5 3 Q20.5 3 19.5 7.5 L18 17.5"/></g></svg>
<svg style="left:1887px;top:265px" width="17" height="23" viewBox="0 0 17 23"><rect x="0" y="0" width="17" height="23" fill="#C5E6F3"/><g fill="#5A7F95" opacity="0.75"><rect x="2" y="2" width="13" height="1.2"/><rect x="2" y="6.5" width="13" height="1.2"/><rect x="2" y="11" width="13" height="1.2"/><rect x="2" y="15.5" width="13" height="1.2"/><rect x="2" y="20" width="13" height="1.2"/></g></svg>

<div id="status" class="a"></div>
<svg style="left:17px;top:1005.5px" width="11" height="11" viewBox="0 0 11 11"><rect x="1" y="1" width="9" height="9" rx="2" fill="#E7EFFD" stroke="#4682FA" stroke-width="1.2"/></svg>
<div class="a ui" style="left:33px;top:1000.5px;color:#676B78">LogsDemo</div>
<div class="a ui" style="left:144px;top:1000.5px;color:#676B78">src</div>
<div class="a ui" style="left:195px;top:1000.5px;color:#676B78">main</div>
<div class="a ui" style="left:263px;top:1000.5px;color:#676B78">java</div>
<div class="a ui" style="left:324px;top:1000.5px;color:#676B78">cn</div>
<div class="a ui" style="left:373px;top:1000.5px;color:#676B78">sumou</div>
<svg style="left:125px;top:1004.5px" width="8" height="12" viewBox="0 0 8 12"><path d="M1.5 1L6.5 6L1.5 11" stroke="#6C707E" stroke-width="1.2" fill="none"/></svg>
<svg style="left:175px;top:1004.5px" width="8" height="12" viewBox="0 0 8 12"><path d="M1.5 1L6.5 6L1.5 11" stroke="#6C707E" stroke-width="1.2" fill="none"/></svg>
<svg style="left:244px;top:1004.5px" width="8" height="12" viewBox="0 0 8 12"><path d="M1.5 1L6.5 6L1.5 11" stroke="#6C707E" stroke-width="1.2" fill="none"/></svg>
<svg style="left:304px;top:1004.5px" width="8" height="12" viewBox="0 0 8 12"><path d="M1.5 1L6.5 6L1.5 11" stroke="#6C707E" stroke-width="1.2" fill="none"/></svg>
<svg style="left:353px;top:1004.5px" width="8" height="12" viewBox="0 0 8 12"><path d="M1.5 1L6.5 6L1.5 11" stroke="#6C707E" stroke-width="1.2" fill="none"/></svg>
<svg style="left:436px;top:1004.5px" width="8" height="12" viewBox="0 0 8 12"><path d="M1.5 1L6.5 6L1.5 11" stroke="#6C707E" stroke-width="1.2" fill="none"/></svg>
<svg style="left:455px;top:1001.5px" width="19" height="19" viewBox="0 0 19 19"><circle cx="8.9" cy="10.2" r="8.4" fill="#E9EFFC" stroke="#5F88E2" stroke-width="1.3"/><path d="M11.5 7.9 Q10.6 6.6 9 6.6 Q6 6.6 6 10.2 Q6 13.8 9 13.8 Q10.6 13.8 11.5 12.5" fill="none" stroke="#5A80D8" stroke-width="1.3"/><path d="M7.8 4.6 L11.2 0.6 L11.2 7.2 Z" fill="#D6486A"/><path d="M11.6 0.4 L16.2 4 L11.6 7.6 Z" fill="#4DA861"/></svg>
<div class="a ui" style="left:480px;top:1000.5px;color:#676B78">Log4jTest</div>
<div class="a ui" style="left:1620px;top:1002px;color:#676B78">61:8</div>
<div class="a ui" style="left:1671px;top:1002px;color:#676B78">CRLF</div>
<div class="a ui" style="left:1729px;top:1002px;color:#676B78">UTF-8</div>
<div class="a ui" style="left:1795px;top:1002px;color:#676B78">4 <span class="k">个空格</span></div>
<svg style="left:1881px;top:1004px" width="18" height="17" viewBox="0 0 18 17"><g stroke="#6C707E" stroke-width="1.5" fill="none"><rect x="1.5" y="7.5" width="10" height="8" rx="1"/><path d="M9 7.5V4.5Q9 1.5 12.5 1.5Q16 1.5 16 4.5V6"/></g></svg>
<div id="taskbar" class="a"></div>
<svg style="left:20px;top:1044px" width="20" height="10" viewBox="0 0 20 10"><g fill="#fff"><rect x="0" y="2" width="9" height="8"/><rect x="10.5" y="0" width="9.5" height="10"/></g></svg>
<svg style="left:81px;top:1040px" width="24" height="14" viewBox="0 0 24 14"><circle cx="12" cy="12" r="9.3" fill="none" stroke="#fff" stroke-width="2.3"/></svg>
<svg style="left:139px;top:1040px" width="31" height="14" viewBox="0 0 31 14"><defs><linearGradient id="eg" x1="0" y1="0" x2="1" y2="0"><stop offset="0" stop-color="#2FB3D6"/><stop offset="1" stop-color="#66E37A"/></linearGradient></defs><circle cx="15.5" cy="15.5" r="15" fill="url(#eg)"/><path d="M1 14 Q3 7 10 6.5 Q17 6.5 17 14 Z" fill="#1D7FD0"/><path d="M5 14 Q8 10 12 11 Q14 12 13 14Z" fill="#0B4F9A"/></svg>
<svg style="left:200px;top:1040px" width="31" height="14" viewBox="0 0 31 14"><path d="M2 14 L5 3 L12 0.5 L18 2 L14 14 Z" fill="#F9B13B"/><path d="M7 14 L9 2 Q13 -0.5 17 1.5 L20 6 L17 14 Z" fill="#E6206B"/><path d="M16 3 L22 0.5 L29 8 L27 14 L18 14 Z" fill="#1FB2EA"/><path d="M22 0.5 L29 8 L25 6Z" fill="#46DDF0"/><rect x="9" y="6" width="15" height="8" fill="#150A14"/><g fill="#fff"><rect x="11" y="8.5" width="1.6" height="5.5"/><rect x="10.2" y="8.5" width="3.2" height="1"/><path d="M15 8.5H18V14H16.5V9.5H15Z"/></g></svg>
<svg style="left:263px;top:1040px" width="31" height="14" viewBox="0 0 31 14"><rect x="0" y="0" width="31" height="22" rx="5" fill="#5B83F2"/><path d="M9 14 L15.5 7 L22 14 Z" fill="#fff"/></svg>
<svg style="left:325px;top:1040px" width="31" height="14" viewBox="0 0 31 14"><circle cx="15.5" cy="15.5" r="15" fill="#2A86EE"/><g stroke="#fff" stroke-width="2.2" fill="none" stroke-linecap="round"><path d="M10 13 Q12 11 11 9M14 14 Q17 10 15 6M18 14 Q22 8 19 3"/></g></svg>
<div class="a" style="left:372px;top:1030px;width:61px;height:24px;background:#474D53"></div>
<svg style="left:386px;top:1040px" width="33" height="14" viewBox="0 0 33 14"><circle cx="16.5" cy="16.5" r="15.2" fill="#2A2A2A" stroke="#CFCFCF" stroke-width="1.6"/><path d="M9 11 Q12 4 19 6 Q14 7 13 12Z" fill="#D0D0D0"/><path d="M21 5 Q27 8 25 14 L21 14 Q23 9 18 8Z" fill="#D0D0D0"/></svg>
<svg style="left:450px;top:1042px" width="29" height="12" viewBox="0 0 29 12"><path d="M0 2 Q0 0 2 0 H10 L12 2 H27 Q29 2 29 4 V12 H0Z" fill="#F5C242"/><rect x="0" y="4" width="29" height="8" fill="#FFD866"/></svg>
<div class="a" style="left:1787px;top:1034px;font-size:15px;line-height:18px;color:#fff">11:27</div>
<svg style="left:1592px;top:1047px" width="12" height="7" viewBox="0 0 12 7"><path d="M1 6L6 1.5L11 6" stroke="#fff" stroke-width="1.3" fill="none"/></svg>
<div class="a" style="left:1622px;top:1043px;width:9px;height:11px;background:#fff;border-radius:1px"></div>
<svg style="left:1647px;top:1046px" width="20" height="8" viewBox="0 0 20 8"><path d="M1 8V2H19V8M4 8V5H16V8" stroke="#fff" stroke-width="1.3" fill="none"/></svg>
<svg style="left:1677px;top:1043px" width="20" height="11" viewBox="0 0 20 11"><path d="M2 11V6H6L11 2V11M14 3Q17 7 14 11M17 1Q21 6 17 11" stroke="#fff" stroke-width="1.3" fill="none"/></svg>
<svg style="left:1712px;top:1045px" width="18" height="9" viewBox="0 0 18 9"><path d="M2 9Q9 1 16 9M5 9Q9 5 13 9" stroke="#fff" stroke-width="1.3" fill="none"/></svg>
<div class="a" style="left:1736px;top:1040px;font-size:17px;line-height:20px;color:#fff;height:14px;overflow:hidden"><span class="k" style="font-size:18px">英</span></div>
<div class="a" style="left:1868px;top:1045px;width:20px;height:9px;border:1.3px solid #fff;border-bottom:none"></div>
<div class="a" style="left:1914px;top:1030px;width:1px;height:24px;background:#666"></div>
<svg style="left:1571px;top:503px" width="10" height="18" viewBox="0 0 10 18"><path d="M1.5 1.5H4.5Q5 1.5 5 2.5V15.5Q5 16.5 4.5 16.5H1.5M8.5 1.5H5.5Q5 1.5 5 2.5M5 15.5Q5 16.5 5.5 16.5H8.5" stroke="#000" stroke-width="1.3" fill="none"/></svg>
<div class="a" style="left:0;top:1054px;width:1920px;height:26px;background:#000"></div>
</body></html>
